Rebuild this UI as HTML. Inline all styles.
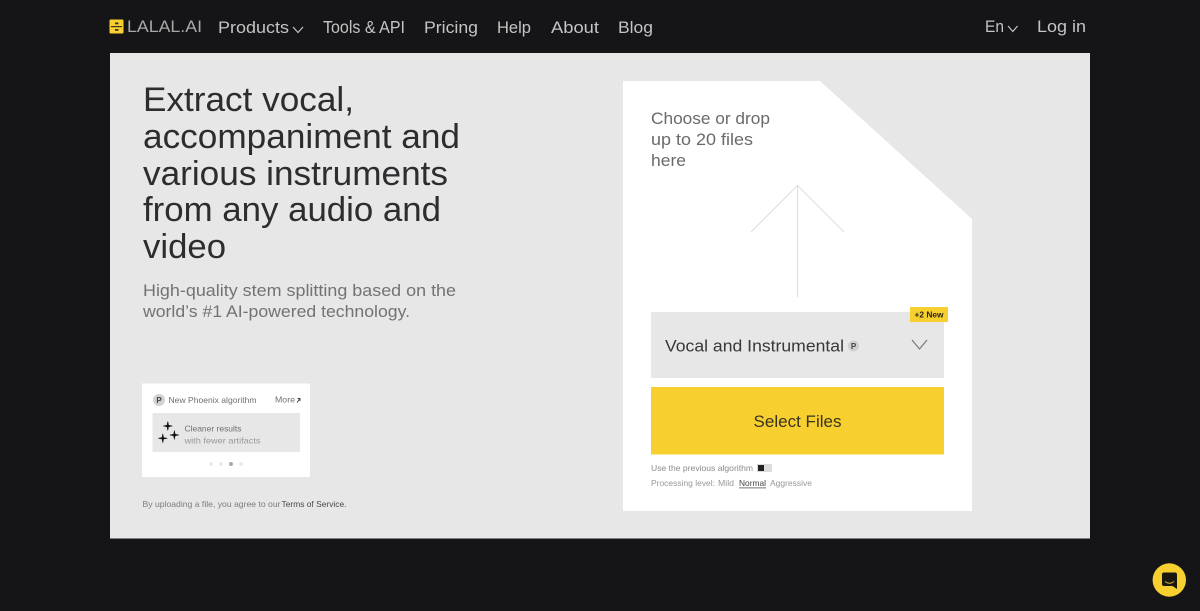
<!DOCTYPE html>
<html lang="en">
<head>
<meta charset="utf-8">
<title>LALAL.AI</title>
<style>
html,body{margin:0;padding:0;width:1200px;height:611px;overflow:hidden;background:#151417}
svg{display:block}
text{font-family:"Liberation Sans",sans-serif;}
</style>
</head>
<body>
<svg width="1200" height="611" viewBox="0 0 1200 611" xmlns="http://www.w3.org/2000/svg">
<rect width="1200" height="611" fill="#151417"/>
<!-- header -->
<rect x="109.500" y="19.500" width="14" height="14" rx="1" fill="#f7d02f"/>
<rect x="111" y="26" width="11" height="1.200" fill="#3a3320"/>
<rect x="115" y="22.500" width="3.500" height="1.800" fill="#3a3320"/>
<rect x="115" y="29" width="3.500" height="1.800" fill="#3a3320"/>
<g fill="#c4c4c4" font-size="17">
<text x="127" y="32" font-size="17" textLength="75" lengthAdjust="spacingAndGlyphs" fill="#a8a8a8">LALAL.AI</text>
<text x="218" y="33" textLength="71" lengthAdjust="spacingAndGlyphs">Products</text>
<text x="323" y="33" font-size="17.500" textLength="82" lengthAdjust="spacingAndGlyphs">Tools &amp; API</text>
<text x="424" y="33" textLength="54" lengthAdjust="spacingAndGlyphs">Pricing</text>
<text x="497" y="33" textLength="34" lengthAdjust="spacingAndGlyphs">Help</text>
<text x="551" y="33" textLength="48" lengthAdjust="spacingAndGlyphs">About</text>
<text x="618" y="33" textLength="35" lengthAdjust="spacingAndGlyphs">Blog</text>
<text x="985" y="32" textLength="19" lengthAdjust="spacingAndGlyphs">En</text>
<text x="1037" y="32" textLength="49" lengthAdjust="spacingAndGlyphs">Log in</text>
</g>
<path d="M293 27 L298 32.500 L303 27" fill="none" stroke="#c4c4c4" stroke-width="1.200"/>
<path d="M1008 26 L1012.800 31.500 L1017.500 26" fill="none" stroke="#c4c4c4" stroke-width="1.200"/>
<!-- hero -->
<rect x="110" y="53" width="980" height="485.500" fill="#e7e7e7"/>
<g fill="#2d2c2f" font-size="34">
<text x="143" y="111" textLength="211" lengthAdjust="spacingAndGlyphs">Extract vocal,</text>
<text x="143" y="148" textLength="317" lengthAdjust="spacingAndGlyphs">accompaniment and</text>
<text x="143" y="185" textLength="305" lengthAdjust="spacingAndGlyphs">various instruments</text>
<text x="143" y="221" textLength="298" lengthAdjust="spacingAndGlyphs">from any audio and</text>
<text x="143" y="258" textLength="83" lengthAdjust="spacingAndGlyphs">video</text>
</g>
<g fill="#737375" font-size="16.500">
<text x="143" y="296" textLength="313" lengthAdjust="spacingAndGlyphs">High-quality stem splitting based on the</text>
<text x="143" y="317" textLength="267" lengthAdjust="spacingAndGlyphs">world’s #1 AI-powered technology.</text>
</g>
<!-- promo card -->
<rect x="142" y="383.500" width="168" height="93.500" fill="#fff"/>
<circle cx="159" cy="400" r="6" fill="#d2d2d2"/>
<text x="159" y="403" font-size="8" text-anchor="middle" fill="#444" font-weight="bold">P</text>
<text x="168.500" y="403" font-size="8.500" fill="#707072" textLength="88" lengthAdjust="spacingAndGlyphs">New Phoenix algorithm</text>
<text x="275" y="402.500" font-size="8.500" fill="#707072" textLength="20" lengthAdjust="spacingAndGlyphs">More</text>
<path d="M297 402.500 L300 398.500 M297.500 398.500 H300 V401" fill="none" stroke="#444" stroke-width="1"/>
<rect x="152.500" y="413" width="147.500" height="39" fill="#e7e7e7"/>
<g fill="#111" stroke="#111" stroke-width=".5">
<path d="M167.800 421.500 L168.600 425.200 L172.300 426 L168.600 426.800 L167.800 430.500 L167 426.800 L163.300 426 L167 425.200Z"/>
<path d="M174.400 430.500 L175.200 434.200 L178.900 435 L175.200 435.800 L174.400 439.500 L173.600 435.800 L169.900 435 L173.600 434.200Z"/>
<path d="M162.800 433.800 L163.600 437.500 L167.300 438.300 L163.600 439.100 L162.800 442.800 L162 439.100 L158.300 438.300 L162 437.500Z"/>
</g>
<text x="184.500" y="431.500" font-size="8.500" fill="#707072" textLength="57" lengthAdjust="spacingAndGlyphs">Cleaner results</text>
<text x="184.500" y="443.500" font-size="8.500" fill="#98989a" textLength="76" lengthAdjust="spacingAndGlyphs">with fewer artifacts</text>
<circle cx="211" cy="464" r="1.700" fill="#e7e7e7"/>
<circle cx="221" cy="464" r="1.700" fill="#e7e7e7"/>
<circle cx="231" cy="464" r="2" fill="#a8a8a8"/>
<circle cx="241" cy="464" r="1.700" fill="#e7e7e7"/>
<text x="142.500" y="507" font-size="8.500" fill="#7d7d7f" textLength="138" lengthAdjust="spacingAndGlyphs">By uploading a file, you agree to our</text>
<text x="281.500" y="507" font-size="8.500" fill="#4a4a4c" textLength="65" lengthAdjust="spacingAndGlyphs">Terms of Service.</text>
<!-- upload card -->
<polygon points="623,81 820,81 972,219 972,511 623,511" fill="#fff"/>
<g fill="#6a6a6c" font-size="16.500">
<text x="651" y="124" textLength="119" lengthAdjust="spacingAndGlyphs">Choose or drop</text>
<text x="651" y="145" textLength="102" lengthAdjust="spacingAndGlyphs">up to 20 files</text>
<text x="651" y="166" textLength="35" lengthAdjust="spacingAndGlyphs">here</text>
</g>
<path d="M751 232 L797.500 185.500 L844 232 M797.500 185.500 V297" fill="none" stroke="#dedede" stroke-width="1"/>
<rect x="651" y="312" width="293" height="66" fill="#e7e7e7"/>
<text x="665" y="351.500" font-size="16.500" fill="#38383b" textLength="179" lengthAdjust="spacingAndGlyphs">Vocal and Instrumental</text>
<circle cx="853.500" cy="346" r="5.500" fill="#cfcfcf"/>
<text x="853.500" y="349" font-size="8" text-anchor="middle" fill="#444" font-weight="bold">P</text>
<path d="M912 340 L919.500 349 L927 340" fill="none" stroke="#777" stroke-width="1.200"/>
<rect x="910" y="307" width="38" height="15" fill="#f7d02f"/>
<text x="914.500" y="317.500" font-size="8.500" font-weight="bold" fill="#2a2414" textLength="29" lengthAdjust="spacingAndGlyphs">+2 New</text>
<rect x="651" y="387" width="293" height="67.500" fill="#f7d02f"/>
<text x="753.500" y="427" font-size="16.500" fill="#3a3320" textLength="88" lengthAdjust="spacingAndGlyphs">Select Files</text>
<text x="651" y="471" font-size="8.500" fill="#8a8a8c" textLength="102" lengthAdjust="spacingAndGlyphs">Use the previous algorithm</text>
<rect x="757" y="464" width="15" height="8" fill="#dcdcdc"/>
<rect x="758" y="465" width="6" height="6" fill="#222"/>
<text x="651" y="486" font-size="8.500" fill="#98989a" textLength="64" lengthAdjust="spacingAndGlyphs">Processing level:</text>
<text x="718" y="486" font-size="8.500" fill="#98989a" textLength="16" lengthAdjust="spacingAndGlyphs">Mild</text>
<text x="739" y="486" font-size="8.500" fill="#444" textLength="27" lengthAdjust="spacingAndGlyphs">Normal</text>
<rect x="739" y="487.500" width="27" height="0.800" fill="#555"/>
<text x="770" y="486" font-size="8.500" fill="#98989a" textLength="42" lengthAdjust="spacingAndGlyphs">Aggressive</text>
<!-- chat -->
<circle cx="1169.300" cy="580" r="16.700" fill="#f7d02f"/>
<path d="M1164 572.500 H1175 Q1177 572.500 1177 574.500 V589 L1172.500 586 H1164 Q1162 586 1162 584 V574.500 Q1162 572.500 1164 572.500Z" fill="#1a1710"/>
<path d="M1165 581.500 Q1169.500 585 1174 581.500" fill="none" stroke="#d8b62c" stroke-width="1"/>
</svg>
</body>
</html>
